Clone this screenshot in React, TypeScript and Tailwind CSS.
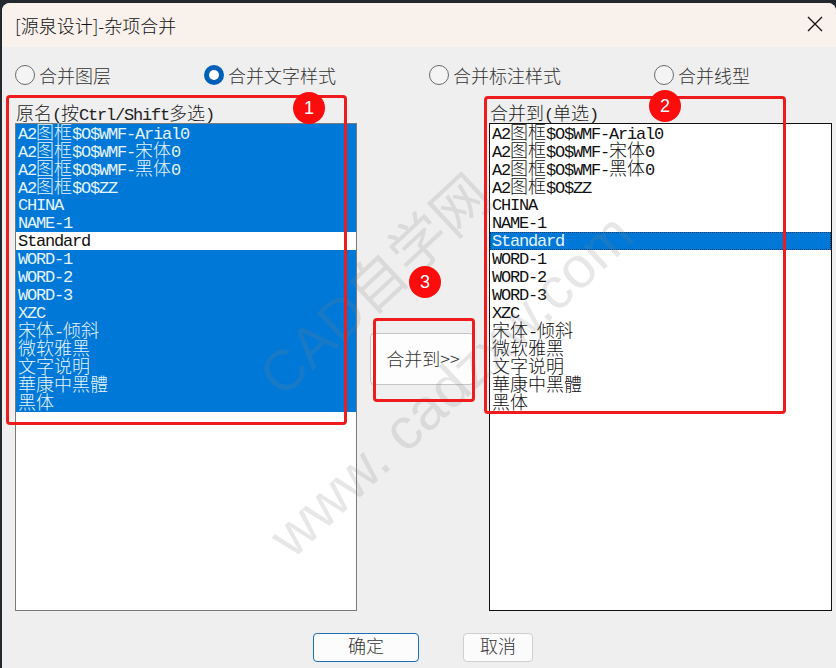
import React from 'react';

const LEFT_ITEMS = [
    'A2图框$O$WMF-Arial0',
    'A2图框$O$WMF-宋体0',
    'A2图框$O$WMF-黑体0',
    'A2图框$O$ZZ',
    'CHINA',
    'NAME-1',
    'Standard',
    'WORD-1',
    'WORD-2',
    'WORD-3',
    'XZC',
    '宋体-倾斜',
    '微软雅黑',
    '文字说明',
    '華康中黑體',
    '黑体',
];

// Latin is 9px wide and CJK 18px, the fixed look of a GDI font
const MixedText = ({ text }: { text: string }) => {
    const runs = text.match(/[\u3400-\u9fff]+|[^\u3400-\u9fff]+/g) || [];
    return (
        <>
            {runs.map((run, i) =>
                /[\u3400-\u9fff]/.test(run) ? (
                    <span key={i} className="text-[18px] font-light font-['Noto_Sans_CJK_SC',sans-serif]">{run}</span>
                ) : (
                    <span key={i} className="text-[17px] tracking-[-1.2px] font-['Liberation_Mono',monospace]">{run}</span>
                )
            )}
        </>
    );
};

const ListBox = ({ label, selected, borderClass, wClass, dotted }: { label: string; selected: (i: number) => boolean; borderClass: string; wClass: string; dotted?: boolean }) => (
    <div className={`${wClass} flex flex-col`}>
        <div className="h-[18px] pl-px text-[#222] leading-[15px] whitespace-nowrap"><MixedText text={label} /></div>
        <div className={`h-[488px] border ${borderClass} bg-white`}>
            {LEFT_ITEMS.map((item, i) => (
                <div
                    key={item}
                    className={`h-[18px] pl-0.5 leading-[15px] whitespace-nowrap ${selected(i) ? 'bg-[#0078d7] text-[#e6f4ff]' : 'text-[#111]'} ${selected(i) && dotted ? 'outline-1 outline-dotted -outline-offset-1 outline-[#0b3d66]' : ''}`}
                >
                    <MixedText text={item} />
                </div>
            ))}
        </div>
    </div>
);

const Radio = ({ label, checked, wClass }: { label: string; checked?: boolean; wClass: string }) => (
    <div className={`${wClass} flex items-center gap-1`}>
        {checked ? (
            <div className="w-5 h-5 rounded-full bg-[#005fb8] flex items-center justify-center">
                <div className="w-2.5 h-2.5 rounded-full bg-white" />
            </div>
        ) : (
            <div className="w-5 h-5 rounded-full border border-[#6b6b6b] bg-[#f4f4f4]" />
        )}
        <span className="text-[18px] font-light text-[#333] leading-5">{label}</span>
    </div>
);

const Badge = ({ n, className }: { n: number; className: string }) => (
    <div className={`absolute w-8 h-8 rounded-full bg-[#fb0d0d] text-white text-[18px] flex items-center justify-center font-['Liberation_Sans',sans-serif] ${className}`}>
        {n}
    </div>
);

export default function App() {
    return (
        <div className="relative w-[836px] h-[668px] overflow-hidden bg-[#23272e] font-['Noto_Sans_CJK_SC',sans-serif]">
            <div className="absolute left-[2px] top-[3px] w-[834px] h-[665px] rounded-t-lg bg-[#efefef] flex flex-col">
                {/* title bar */}
                <div className="h-[44px] shrink-0 bg-[#f9f1ec] flex items-center justify-between pl-[13px] pr-[13px] rounded-t-lg">
                    <span className="text-[18px] text-[#111] font-light">[源泉设计]-杂项合并</span>
                    <svg width="16" height="16" viewBox="0 0 16 16" className="-mt-0.5" fill="none" stroke="#111" strokeWidth="1.3">
                        <path d="M1 1 L15 15 M15 1 L1 15" />
                    </svg>
                </div>
                {/* radios */}
                <div className="h-[30px] mt-[13px] flex items-center pl-[13px]">
                    <Radio label="合并图层" wClass="w-[189px]" />
                    <Radio label="合并文字样式" wClass="w-[225px]" checked />
                    <Radio label="合并标注样式" wClass="w-[225px]" />
                    <Radio label="合并线型" wClass="w-[140px]" />
                </div>
                {/* lists */}
                <div className="flex mt-[15px] pl-[13px]">
                    <ListBox
                        label="原名(按Ctrl/Shift多选)"
                        wClass="w-[342px]"
                        borderClass="border-[#7a7a7a]"
                        selected={(i) => i !== 6}
                    />
                    <div className="w-[132px] pl-[13px] pt-[228px]">
                        <div className="w-[104px] h-[52px] pb-0.5 pl-0.5 bg-[#fdfdfd] border border-[#c4c4c4] rounded flex items-center justify-center text-[18px] text-[#333] font-light">
                            合并到&gt;&gt;
                        </div>
                    </div>
                    <ListBox
                        label="合并到(单选)"
                        wClass="w-[343px]"
                        borderClass="border-[#111]"
                        selected={(i) => i === 6}
                        dotted
                    />
                </div>
                {/* buttons */}
                <div className="flex mt-[22px] pl-[311px] gap-[44px]">
                    <div className="w-[106px] h-[29px] pb-1 rounded bg-[#fcfcfc] border border-[#1a6fb5] flex items-center justify-center text-[18px] font-light text-[#333]">确定</div>
                    <div className="w-[70px] h-[29px] pb-1 rounded bg-[#fbfbfb] border border-[#cfcfcf] flex items-center justify-center text-[18px] font-light text-[#333]">取消</div>
                </div>
            </div>

            {/* watermark */}
            <div className="absolute left-[215px] top-[257px] w-[320px] h-[56px] text-center rotate-[-43deg] text-[57px] leading-[56px] text-[#80808030] whitespace-nowrap pointer-events-none font-['Liberation_Sans','Noto_Sans_CJK_SC',sans-serif]">CAD自学网</div>
            <div className="absolute left-[201px] top-[357px] w-[500px] h-[56px] text-center rotate-[-43deg] text-[58px] leading-[56px] text-[#80808030] whitespace-nowrap pointer-events-none font-['Liberation_Sans',sans-serif]">www. cadzxw.com</div>

            {/* red annotations */}
            <div className="absolute left-[6px] top-[95px] w-[341px] h-[330px] border-[3px] border-[#ee1c1c] rounded-sm" />
            <div className="absolute left-[484px] top-[96px] w-[302px] h-[318px] border-[3px] border-[#ee1c1c] rounded-sm" />
            <div className="absolute left-[373px] top-[318px] w-[102px] h-[84px] border-[3px] border-[#ee1c1c] rounded-sm" />
            <Badge n={1} className="left-[293px] top-[92px]" />
            <Badge n={2} className="left-[649px] top-[90px]" />
            <Badge n={3} className="left-[409px] top-[266px]" />
        </div>
    );
}
